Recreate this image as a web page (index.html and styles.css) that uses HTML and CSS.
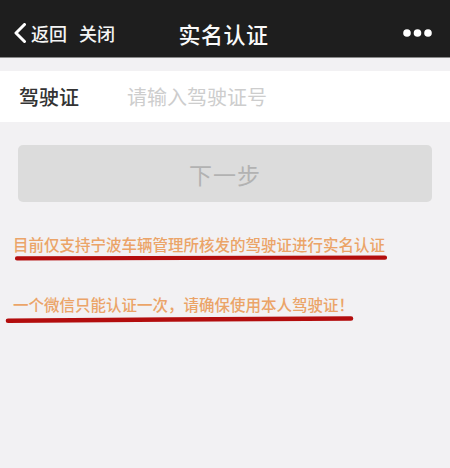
FILE: index.html
```html
<!DOCTYPE html>
<html lang="zh-CN">
<head>
<meta charset="utf-8">
<title>实名认证</title>
<link rel="stylesheet" href="styles.css">
</head>
<body>
<header class="topbar">
  <div class="nav-left">
    <svg class="chevron" width="14" height="20" viewBox="0 0 14 20"><path d="M11.5 1.5 L3 10 L11.5 18.5" fill="none" stroke="#fff" stroke-width="3" stroke-linecap="round" stroke-linejoin="round"/></svg>
    <span class="nav-back">返回</span>
    <span class="nav-close">关闭</span>
  </div>
  <div class="nav-title">实名认证</div>
  <div class="nav-right">
    <svg class="more" width="32" height="10" viewBox="0 0 32 10"><circle cx="5" cy="5" r="3.8" fill="#fff"/><circle cx="15.5" cy="5" r="3.8" fill="#fff"/><circle cx="26" cy="5" r="3.8" fill="#fff"/></svg>
  </div>
</header>

<main class="content">
  <div class="field-row">
    <label class="field-label" for="lic">驾驶证</label>
    <input class="field-input" id="lic" type="text" placeholder="请输入驾驶证号">
  </div>

  <button class="next-btn" type="button" disabled>下一步</button>

  <div class="note note-first">
    <p class="note-text">目前仅支持宁波车辆管理所核发的驾驶证进行实名认证</p>
    <svg class="mark" width="450" height="8" viewBox="0 0 450 8"><path d="M17 4.4 C120 4 260 3.6 385 3.7" fill="none" stroke="#b30d0d" stroke-width="4.2" stroke-linecap="round"/></svg>
  </div>

  <div class="note note-second">
    <p class="note-text">一个微信只能认证一次，请确保使用本人驾驶证！</p>
    <svg class="mark" width="450" height="10" viewBox="0 0 450 10"><path d="M8 6.8 C120 6 240 4.6 351 4.5" fill="none" stroke="#b30d0d" stroke-width="4.6" stroke-linecap="round"/></svg>
  </div>
</main>
</body>
</html>
```

FILE: styles.css
```css
* {
  box-sizing: border-box;
}

html, body {
  margin: 0;
  padding: 0;
}

body {
  width: 450px;
  min-height: 468px;
  background: #f2f1f3;
  font-family: "Noto Sans CJK SC", "Noto Sans", sans-serif;
  overflow: hidden;
}

.topbar {
  height: 58px;
  padding: 9px 16px 0 13px;
  background: #1e1e1e;
  border-bottom: 1px solid #8a8a8a;
  display: grid;
  grid-template-columns: 1fr auto 1fr;
  align-items: center;
  color: #fff;
}

.nav-left {
  display: flex;
  align-items: center;
}

.chevron {
  display: block;
  margin-right: 4px;
}

.nav-back,
.nav-close {
  font-size: 18px;
  line-height: 24px;
  font-weight: 500;
  color: #f4f4f4;
}

.nav-close {
  margin-left: 12px;
}

.nav-title {
  font-size: 22px;
  line-height: 28px;
  font-weight: 500;
  letter-spacing: 0.5px;
  color: #fafafa;
}

.nav-right {
  display: flex;
  justify-content: flex-end;
}

.more {
  display: block;
}

.content {
  padding-top: 13px;
}

.field-row {
  height: 51px;
  background: #fff;
  display: flex;
  align-items: center;
  padding-left: 19px;
}

.field-label {
  width: 108px;
  font-size: 20px;
  font-weight: 500;
  color: #333;
}

.field-input {
  flex: 1;
  border: none;
  outline: none;
  background: transparent;
  font-family: inherit;
  font-size: 20px;
  padding: 0;
  color: #333;
}

.field-input::placeholder {
  color: #cdcdcd;
}

.next-btn {
  display: block;
  width: 414px;
  height: 57px;
  margin: 23px 0 0 18px;
  border: none;
  border-radius: 5px;
  background: #dcdcdc;
  color: #b2b2b2;
  font-family: inherit;
  font-size: 23px;
  letter-spacing: 1px;
}

.note {
  display: flex;
  flex-direction: column;
}

.note-first {
  margin-top: 32px;
}

.note-second {
  margin-top: 32px;
}

.note-text {
  margin: 0;
  padding-left: 13px;
  font-size: 15.5px;
  line-height: 20px;
  font-weight: 500;
  color: #eba468;
  white-space: nowrap;
}

.mark {
  display: block;
}
```
